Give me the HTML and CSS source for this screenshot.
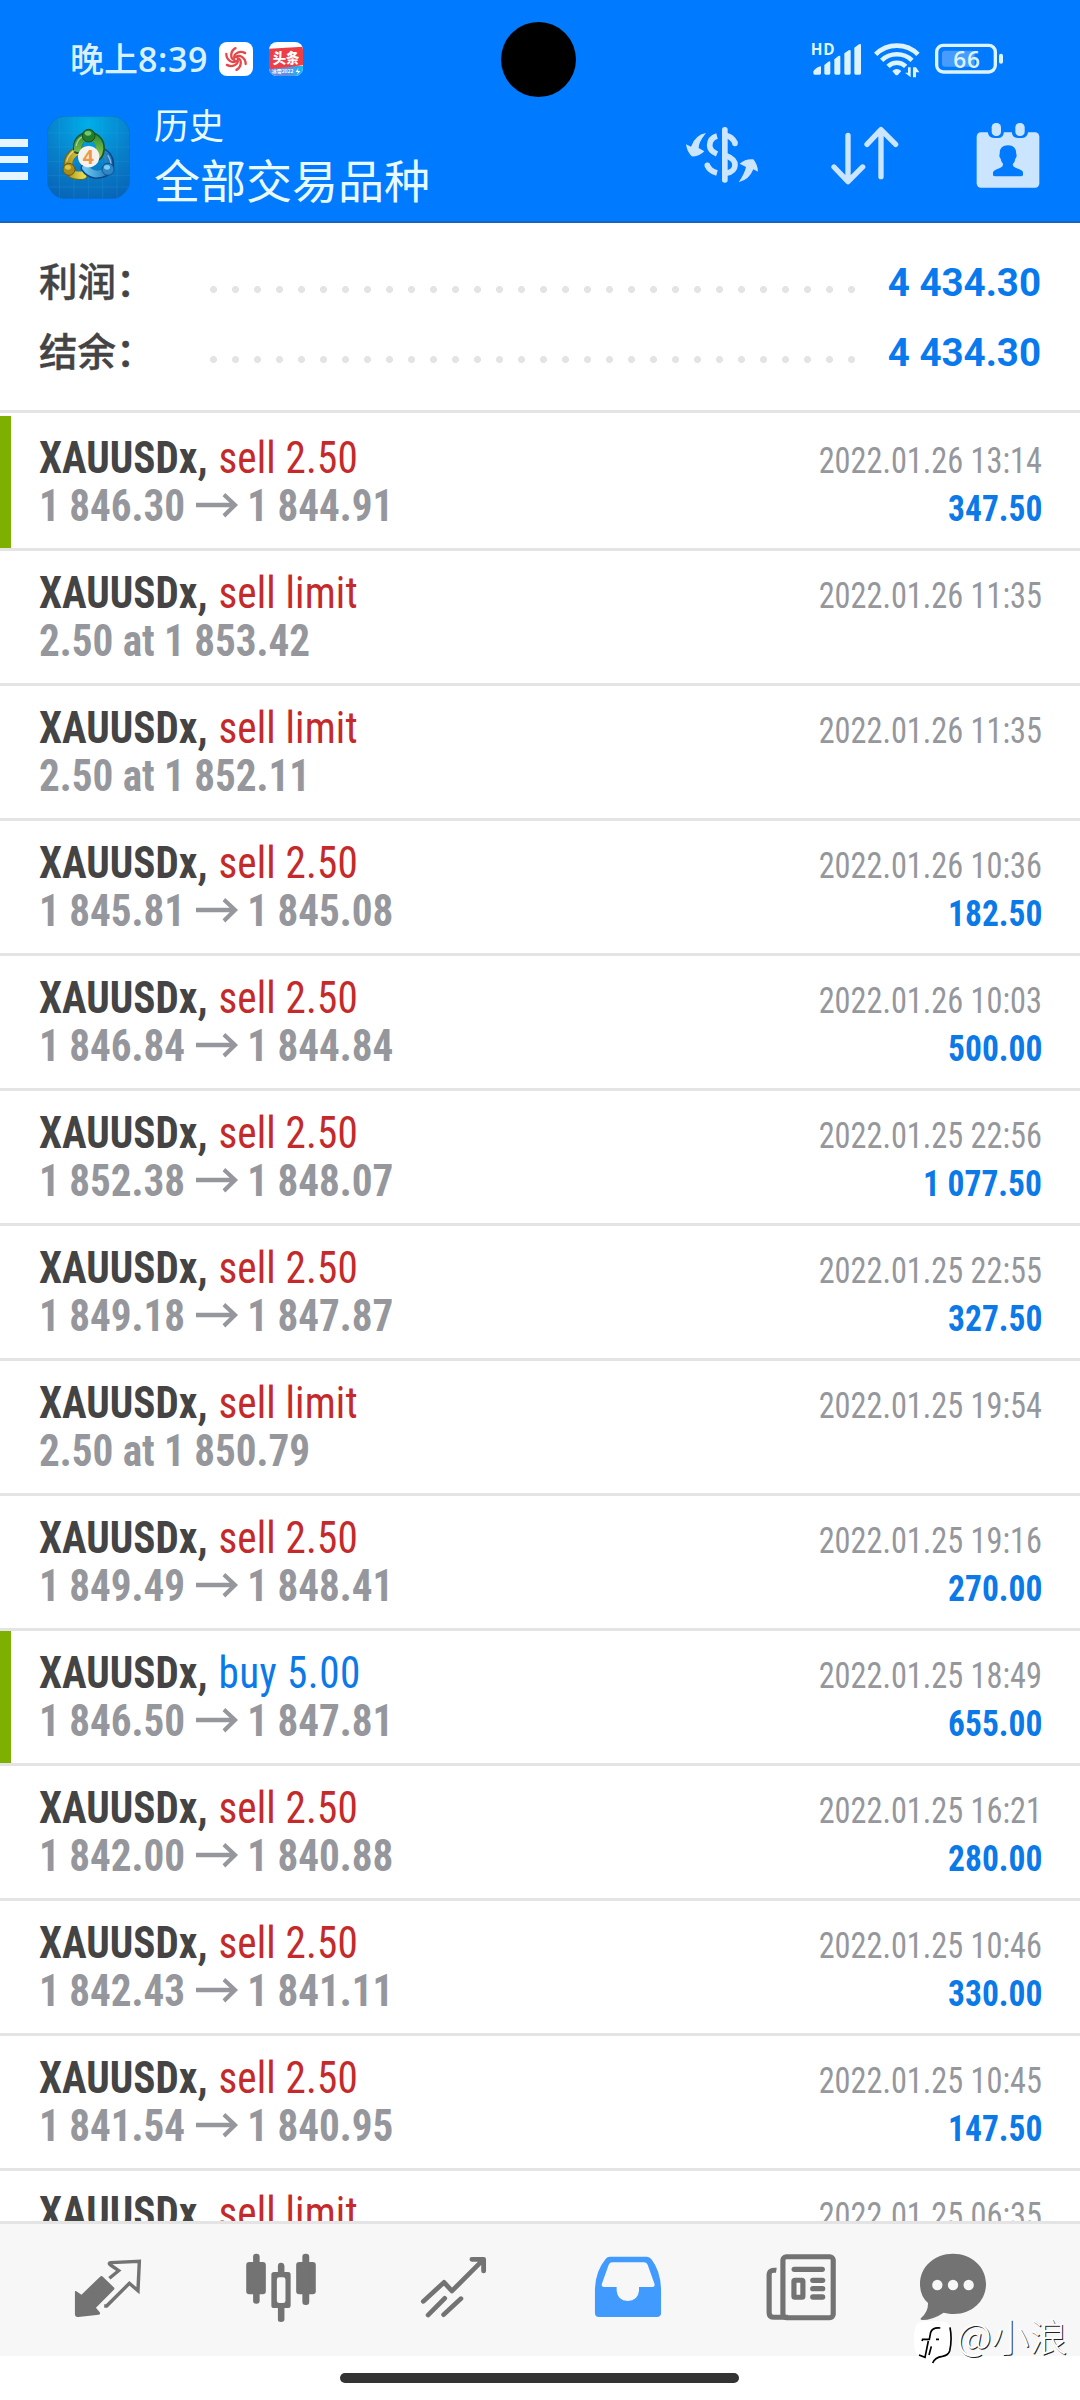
FILE: index.html
```html
<!DOCTYPE html>
<html lang="zh-CN">
<head>
<meta charset="utf-8">
<title>历史</title>
<link rel="stylesheet" href="styles.css">
</head>
<body>
<svg class="defs" width="0" height="0" aria-hidden="true">
  <symbol id="arrow" viewBox="586 320 128 72"><path d="M588 356H706M671 327L704 356L671 386" fill="none" stroke="#95979c" stroke-width="12"/></symbol>
</svg>
<header class="header">
  <div class="status">
    <div class="status-left">
      <span class="clock">晚上<b class="time">8:39</b></span>
      <svg class="badge" viewBox="0 0 102 102"><rect width="102" height="102" rx="24" fill="#fff"/><g fill="none" stroke="#e5484b" stroke-width="7" stroke-linecap="round"><path id="blade" d="M51 45C62 36 80 48 80 66"/><use href="#blade" transform="rotate(60 51 51)"/><use href="#blade" transform="rotate(120 51 51)"/><use href="#blade" transform="rotate(180 51 51)"/><use href="#blade" transform="rotate(240 51 51)"/><use href="#blade" transform="rotate(300 51 51)"/></g></svg>
      <svg class="badge badge-news" viewBox="0 0 102 102"><defs><clipPath id="r"><rect width="102" height="102" rx="24"/></clipPath><linearGradient id="nb"><stop offset=".5" stop-color="#668de0"/><stop offset="1" stop-color="#13b9f5"/></linearGradient></defs><g clip-path="url(#r)"><rect width="102" height="102" fill="#fff"/><path d="M0 72H102V102H0Z" fill="url(#nb)"/><path d="M0 20L102 14V70L0 82Z" fill="#ee3e45"/><text x="51" y="64" class="news-title" text-anchor="middle">头条</text><text x="8" y="94" class="news-sub">冰雪2022</text><path d="M88 79L80 90H87L84 98L94 87H87Z" fill="#fff"/></g></svg>
    </div>
    <svg class="status-icons" viewBox="420 34 582 114">
      <g fill="#ddf3ff">
        <text x="422" y="75" class="hd" textLength="72">HD</text>
        <path d="M430 125Q440 112 453 110V131Q453 135 449 135H434Q430 135 430 131ZM463 106L475 96Q481 93 481 98V131Q481 135 477 135H467Q463 135 463 131ZM493 89L505 79Q511 76 511 81V131Q511 135 507 135H497Q493 135 493 131ZM523 71L536 62Q542 59 542 64V131Q542 135 538 135H527Q523 135 523 131ZM553 54L567 44Q573 41 573 46V131Q573 135 569 135H557Q553 135 553 131Z"/>
        <path d="M667 124Q680 112 694 124L684 135Q680 139 676 135Z"/>
        <path d="M714 113H722V143L705 129H714ZM729 143V113H738L748 128H738V143Z"/>
        <rect x="987" y="72" width="12" height="30" rx="6"/>
      </g>
      <g fill="none" stroke="#ddf3ff" stroke-width="14"><path d="M617 74A90 90 0 0 1 744 74M635 92A66 66 0 0 1 726 92M654 110A38 38 0 0 1 707 110"/></g>
      <rect x="816" y="63" width="98" height="48" rx="9" fill="#479dff"/>
      <rect x="800" y="47" width="176" height="80" rx="20" fill="none" stroke="#ddf3ff" stroke-width="10"/>
      <text x="890" y="114" class="level" text-anchor="middle" textLength="80">66</text>
    </svg>
  </div>
  <div class="camera"></div>
  <div class="toolbar">
    <div class="menu"><i></i><i></i><i></i></div>
    <svg class="logo" viewBox="20 257 249 249">
      <defs>
        <radialGradient id="bg" cx=".5" cy=".1" r=".95"><stop offset="0" stop-color="#00aeea"/><stop offset=".55" stop-color="#087fc9"/><stop offset="1" stop-color="#0864b8"/></radialGradient>
        <linearGradient id="gg" x2="0" y2="1"><stop offset="0" stop-color="#2d9435"/><stop offset="1" stop-color="#8cc34f"/></linearGradient>
        <linearGradient id="yg"><stop offset="0" stop-color="#b59a1e"/><stop offset="1" stop-color="#e5da4e"/></linearGradient>
        <linearGradient id="ug"><stop offset="0" stop-color="#69c4f1"/><stop offset="1" stop-color="#1b78bb"/></linearGradient>
      </defs>
      <rect x="20.500" y="257.500" width="248" height="248" rx="56" fill="url(#bg)" stroke="#0a70c4" stroke-width="2"/>
      <path d="M58 262V501M101 258V505M144 258V505M187 258V505M230 262V501M22 308H267M21 350H268M21 393H268M21 436H268M25 470H264" stroke="#36b2e6" stroke-opacity=".28" stroke-width="2"/>
      <g fill="none" stroke-linecap="round">
        <path d="M128 435Q96 440 87 422Q74 388 101 367Q114 358 127 362" stroke="#5f6c24" stroke-width="26"/>
        <path d="M128 434Q98 438 88 422Q76 389 102 368Q114 360 126 363" stroke="url(#yg)" stroke-width="22"/>
        <path d="M182 363Q211 376 209 408Q201 434 165 433Q144 430 133 413" stroke="#0b4584" stroke-width="25"/>
        <path d="M183 365Q208 377 206 407Q199 431 167 431Q147 428 136 413" stroke="url(#ug)" stroke-width="21"/>
        <path d="M111 358Q108 324 145 315Q182 323 181 358Q179 374 171 379" stroke="#1c562b" stroke-width="26"/>
        <path d="M112 354Q112 325 145 317Q178 325 178 354Q177 368 170 376" stroke="url(#gg)" stroke-width="22"/>
        <path d="M108 345Q112 325 128 319M79 392Q86 370 102 361M203 376Q213 392 211 405" stroke="#fff" stroke-opacity=".5" stroke-width="4"/>
      </g>
      <circle cx="145" cy="316" r="19" fill="#237b2b" stroke="#145021" stroke-width="3"/><ellipse cx="143" cy="309" rx="10" ry="7" fill="#72c76d"/>
      <circle cx="86" cy="417" r="18" fill="#aa8b16" stroke="#65561d" stroke-width="3"/><ellipse cx="83" cy="411" rx="9" ry="7" fill="#d8c747"/>
      <circle cx="203" cy="417" r="18" fill="#2b87c7" stroke="#12508b" stroke-width="3"/><ellipse cx="200" cy="411" rx="9" ry="7" fill="#80cdf3"/>
      <circle cx="145" cy="379" r="32" fill="#f3f2ef"/><text x="144" y="400" class="four" text-anchor="middle">4</text>
    </svg>
    <div class="titles"><div class="sub">历史</div><h1 class="title">全部交易品种</h1></div>
    <svg class="tool tool-symbol" viewBox="48 290 219 174"><g fill="#cce5ff"><path d="M108 311Q85 340 86 356L103 366Q87 383 65 381Q51 367 48 345L63 352Q75 317 108 311ZM206 459Q225 430 228 413L209 403Q228 387 250 390Q263 406 264 427L250 420Q238 451 206 459Z"/><rect x="156" y="293" width="17" height="167" rx="8"/></g><g fill="none" stroke="#cce5ff" stroke-width="17"><path d="M141 320Q120 326 119 348Q119 365 141 374M112 408Q119 425 141 431M168 319Q186 321 196 342" /><path d="M168 379Q196 389 195 408Q194 427 168 432"/><path d="M112 408V408.1M195 342V342.1" stroke-linecap="round"/></g></svg>
    <svg class="tool tool-sort" viewBox="484 290 204 178"><path d="M535 318V456M493 413L535 457L579 413M634 442V303M592 345L634 301L678 345" fill="none" stroke="#cce5ff" stroke-width="16" stroke-linecap="round" stroke-linejoin="round"/></svg>
    <svg class="tool tool-date" viewBox="918 278 192 200"><rect x="920" y="309" width="188" height="166" rx="13" fill="#cce5ff"/><g fill="#007aff"><path d="M954 306V312Q957 326 972 326H986Q1001 326 1002 306ZM1026 306V312Q1028 326 1043 326H1057Q1072 326 1075 306Z"/><path d="M969 437V429Q972 421 990 416Q1002 411 998 402Q993 397 992 388Q986 383 989 374Q988 348 1014 348Q1039 348 1039 374Q1042 383 1036 388Q1035 397 1029 403Q1026 411 1038 416Q1057 421 1059 429V437Q1058 441 1052 441H976Q969 441 969 437Z"/></g><rect x="965" y="281" width="28" height="39" rx="13" fill="#cce5ff"/><rect x="1036" y="281" width="28" height="39" rx="13" fill="#cce5ff"/></svg>
  </div>
</header>

<section class="summary">
  <div class="sum-row"><span class="label">利润：</span><span class="dots"></span><strong class="total">4 434.30</strong></div>
  <div class="sum-row"><span class="label">结余：</span><span class="dots"></span><strong class="total">4 434.30</strong></div>
</section>

<main class="list">
  <article class="row marked"><div class="deal"><div><b>XAUUSDx,</b> <span class="sell">sell 2.50</span></div><div class="price">1 846.30<svg class="to"><use href="#arrow"/></svg>1 844.91</div></div><div class="info"><time>2022.01.26 13:14</time><b class="profit">347.50</b></div></article>
  <article class="row"><div class="deal"><div><b>XAUUSDx,</b> <span class="sell">sell limit</span></div><div class="price">2.50 at 1 853.42</div></div><div class="info"><time>2022.01.26 11:35</time></div></article>
  <article class="row"><div class="deal"><div><b>XAUUSDx,</b> <span class="sell">sell limit</span></div><div class="price">2.50 at 1 852.11</div></div><div class="info"><time>2022.01.26 11:35</time></div></article>
  <article class="row"><div class="deal"><div><b>XAUUSDx,</b> <span class="sell">sell 2.50</span></div><div class="price">1 845.81<svg class="to"><use href="#arrow"/></svg>1 845.08</div></div><div class="info"><time>2022.01.26 10:36</time><b class="profit">182.50</b></div></article>
  <article class="row"><div class="deal"><div><b>XAUUSDx,</b> <span class="sell">sell 2.50</span></div><div class="price">1 846.84<svg class="to"><use href="#arrow"/></svg>1 844.84</div></div><div class="info"><time>2022.01.26 10:03</time><b class="profit">500.00</b></div></article>
  <article class="row"><div class="deal"><div><b>XAUUSDx,</b> <span class="sell">sell 2.50</span></div><div class="price">1 852.38<svg class="to"><use href="#arrow"/></svg>1 848.07</div></div><div class="info"><time>2022.01.25 22:56</time><b class="profit">1 077.50</b></div></article>
  <article class="row"><div class="deal"><div><b>XAUUSDx,</b> <span class="sell">sell 2.50</span></div><div class="price">1 849.18<svg class="to"><use href="#arrow"/></svg>1 847.87</div></div><div class="info"><time>2022.01.25 22:55</time><b class="profit">327.50</b></div></article>
  <article class="row"><div class="deal"><div><b>XAUUSDx,</b> <span class="sell">sell limit</span></div><div class="price">2.50 at 1 850.79</div></div><div class="info"><time>2022.01.25 19:54</time></div></article>
  <article class="row"><div class="deal"><div><b>XAUUSDx,</b> <span class="sell">sell 2.50</span></div><div class="price">1 849.49<svg class="to"><use href="#arrow"/></svg>1 848.41</div></div><div class="info"><time>2022.01.25 19:16</time><b class="profit">270.00</b></div></article>
  <article class="row marked"><div class="deal"><div><b>XAUUSDx,</b> <span class="buy">buy 5.00</span></div><div class="price">1 846.50<svg class="to"><use href="#arrow"/></svg>1 847.81</div></div><div class="info"><time>2022.01.25 18:49</time><b class="profit">655.00</b></div></article>
  <article class="row"><div class="deal"><div><b>XAUUSDx,</b> <span class="sell">sell 2.50</span></div><div class="price">1 842.00<svg class="to"><use href="#arrow"/></svg>1 840.88</div></div><div class="info"><time>2022.01.25 16:21</time><b class="profit">280.00</b></div></article>
  <article class="row"><div class="deal"><div><b>XAUUSDx,</b> <span class="sell">sell 2.50</span></div><div class="price">1 842.43<svg class="to"><use href="#arrow"/></svg>1 841.11</div></div><div class="info"><time>2022.01.25 10:46</time><b class="profit">330.00</b></div></article>
  <article class="row"><div class="deal"><div><b>XAUUSDx,</b> <span class="sell">sell 2.50</span></div><div class="price">1 841.54<svg class="to"><use href="#arrow"/></svg>1 840.95</div></div><div class="info"><time>2022.01.25 10:45</time><b class="profit">147.50</b></div></article>
  <article class="row"><div class="deal"><div><b>XAUUSDx,</b> <span class="sell">sell limit</span></div></div><div class="info"><time>2022.01.25 06:35</time></div></article>
</main>

<nav class="nav">
  <svg viewBox="210.500 270 209 216" preserveAspectRatio="none"><path d="M219 395Q219 391 223 394L238 404L292 350Q296 346 300 350L333 383Q335 386 332 389L280 443L291 457Q294 463 288 464L229 471Q219 472 219 463Z" fill="#737373"/><path d="M319 355L346 332L321 314Q316 309 323 308L406 304L402 392L377 370L311 438H304" fill="none" stroke="#737373" stroke-width="10"/></svg>
  <svg viewBox="711.500 270 209 216" preserveAspectRatio="none"><g fill="#737373"><rect x="715" y="306" width="57" height="97" rx="9"/><rect x="735" y="281" width="19" height="150" rx="9"/><rect x="860" y="306" width="57" height="97" rx="9"/><rect x="878" y="281" width="20" height="154" rx="9"/><path d="M807 318Q807 308 816 308T826 318V336H837Q844 336 844 344V437Q844 444 837 444H826V478Q826 486 816 486T807 478V444H796Q788 444 788 437V344Q788 336 796 336H807Z"/></g><rect x="804" y="352" width="25" height="77" rx="7" fill="#f7f7f7"/></svg>
  <svg viewBox="1214.500 270 209 216" preserveAspectRatio="none"><path d="M1230 424L1290 367L1313 393L1403 300M1371 298H1405V333M1292 415L1244 465M1339 416L1289 464" fill="none" stroke="#737373" stroke-width="14" stroke-linecap="round" stroke-linejoin="round"/></svg>
  <svg viewBox="149.500 270 209 216" preserveAspectRatio="none"><path fill-rule="evenodd" d="M201 290H309Q317 290 322 298Q350 335 350 395V459Q350 471 337 471H170Q158 471 158 459V395Q158 335 189 297Q194 290 201 290ZM209 307Q201 307 198 314L178 372Q176 381 184 381H221V392Q224 422 253 423Q283 422 286 392V381H325Q333 381 331 372L311 314Q308 307 300 307Z" fill="#419bff"/></svg>
  <svg viewBox="653 270 209 216" preserveAspectRatio="none"><rect x="705" y="290" width="146" height="183" rx="10" fill="none" stroke="#737373" stroke-width="15"/><path d="M686 331Q665 328 665 345V458Q665 472 680 472H720" fill="none" stroke="#737373" stroke-width="15"/><path d="M738 328H819M792 361H820M792 386H820M792 411H820" stroke="#737373" stroke-width="16" stroke-linecap="round"/><rect x="737" y="361" width="26" height="51" rx="3" fill="none" stroke="#737373" stroke-width="15"/></svg>
  <svg viewBox="51 30 216 216"><path d="M159 41C214 41 258 80 258 132C258 190 203 236 131 218Q98 240 66 240Q58 239 64 233Q85 215 84 189Q60 168 60 132C60 80 104 41 159 41Z" fill="#737373"/><g fill="#f7f7f7"><circle cx="112" cy="135" r="15.500"/><circle cx="159" cy="135" r="15.500"/><circle cx="206" cy="135" r="15.500"/></g></svg>
</nav>
<footer class="gesture"><div class="pill"></div></footer>
<div class="watermark">
  <svg viewBox="40 240 120 134"><path d="M62 247Q99 239 136 247Q152 252 155 267Q161 300 152 332Q148 346 130 349Q109 353 100 369Q95 369 98 357Q60 356 48 339Q37 300 47 262Q51 249 62 247Z" fill="#fff"/><path d="M151 262Q158 298 150 333Q146 346 128 349Q106 352 99 369" fill="none" stroke="#000" stroke-width="5"/><path d="M122 264Q99 261 93 277L89 298H69L67 303M86 303L76 352L58 345M95 319L88 345M109 298H118" fill="none" stroke="#000" stroke-width="5"/></svg>
  <span>@小浪</span>
</div>
</body>
</html>
```
FILE: styles.css
```css
* { box-sizing: border-box; }
body {
  margin: 0;
  width: 1080px;
  height: 2400px;
  overflow: hidden;
  position: relative;
  display: flex;
  flex-direction: column;
  background: #fff;
  font-family: Roboto, "Noto Sans CJK SC", sans-serif;
}
svg { display: block; flex: none; }
.defs { position: absolute; }

/* header */
.header { height: 223px; flex: none; background: #007aff; border-bottom: 2px solid #1766bb; position: relative; }
.status { height: 98px; padding: 41px 76px 0 70px; display: flex; justify-content: space-between; }
.status-left { display: flex; }
.clock { width: 149px; height: 36px; line-height: 38px; font-size: 34px; font-weight: 500; color: #d9f1ff; white-space: nowrap; }
.time { font: 600 34px/34px "Open Sans", sans-serif; letter-spacing: .6px; }
.badge { width: 34px; height: 34px; margin-top: 1px; }
.badge-news { margin-left: 16px; }
.news-title { font: 900 40px "Noto Sans CJK SC", sans-serif; fill: #fff; }
.news-sub { font: 700 15px "Noto Sans CJK SC", sans-serif; fill: #fff; }
.status-icons { width: 194px; height: 38px; }
.hd { font: 700 46px "Open Sans", sans-serif; }
.level { font: 600 68px "Open Sans", sans-serif; fill: #ddf3ff; }
.four { font: 700 58px "Noto Sans", sans-serif; fill: #f0964b; }
.camera { position: absolute; left: 500.500px; top: 21.500px; width: 75px; height: 75px; border-radius: 50%; background: #000; }

.toolbar { display: flex; align-items: flex-start; }
.menu { width: 28px; margin: 41px 19px 0 0; display: flex; flex-direction: column; gap: 9px; }
.menu i { height: 7.500px; background: #e6f5ff; }
.logo { width: 83px; height: 83px; margin-top: 18px; }
.titles { margin-left: 24px; width: 532px; color: #e9faff; font-family: "Noto Sans CJK SC", sans-serif; padding-top: 7px; }
.sub { font-size: 35px; line-height: 38px; }
.title { margin: 5px 0 0; font-size: 46px; line-height: 60px; font-weight: 400; }
.tool-symbol { width: 73px; height: 58px; margin: 28px 0 0 0; }
.tool-sort { width: 68px; height: 59.300px; margin: 28px 0 0 72px; }
.tool-date { width: 64px; height: 66.700px; margin: 24px 0 0 77px; }

/* totals */
.summary { height: 190px; flex: none; padding: 21px 39px 0 39px; border-bottom: 3px solid #e4e4e4; }
.sum-row { height: 70px; line-height: 70px; font-size: 38.500px; display: flex; align-items: baseline; }
.label { width: 171px; color: #444; font-family: "Noto Sans CJK SC", sans-serif; font-weight: 500; -webkit-text-stroke: .4px #444; white-space: nowrap; }
.dots { width: 645px; height: 7px; align-self: center; margin-top: 20px; background: radial-gradient(circle at 3.500px 3.500px, #e4e4e4 3.200px, transparent 3.800px) 0 0 / 22px 7px repeat-x; }
.total { margin-left: auto; font-weight: 700; color: #087aed; }

/* deals */
.list { flex: 1; overflow: hidden; padding-top: 3px; min-height: 0; }
.row { height: 135px; padding: 0 38px 0 39px; display: flex; justify-content: space-between; border-bottom: 3px solid #e4e4e4; }
.marked { border-left: 11px solid #7eb000; padding-left: 28px; border-bottom: 0; height: 132px; margin-bottom: 3px; box-shadow: 0 3px #e4e4e4; }
.deal, .info { font-stretch: 75%; white-space: nowrap; }
.deal { font-size: 44px; line-height: 48px; padding-top: 18px; color: #444; transform: scaleX(.936); transform-origin: left; }
.deal b { font-weight: 700; margin-right: 1.500px; }
.sell { color: #c52a2a; font-weight: 450; letter-spacing: .15px; }
.buy { color: #0b79e8; font-weight: 450; letter-spacing: .5px; }
.price { font-weight: 700; color: #95979c; display: flex; align-items: center; letter-spacing: -.05px; }
.to { width: 46px; height: 26px; margin: -2px 9.500px 0 11px; }
.info { font-size: 36px; line-height: 48px; padding-top: 21px; text-align: right; display: flex; flex-direction: column; align-items: flex-end; }
.info time { color: #95979c; transform: scaleX(.897); transform-origin: right; }
.profit { font-weight: 700; color: #0b79e8; transform: scaleX(.93); transform-origin: right; }

/* bottom bar */
.nav { height: 135px; flex: none; background: #f7f7f7; border-top: 3px solid #e4e4e4; padding: 26px 0 0 72px; display: flex; gap: 101.200px; align-items: flex-start; }
.nav svg { width: 72px; height: 72px; }
.nav svg:last-child { margin-left: -20.500px; }
.gesture { height: 44px; flex: none; padding: 17px 0 0 340px; }
.pill { width: 399px; height: 10px; border-radius: 5px; background: #333; }

.watermark { position: absolute; left: 913px; top: 2320px; display: flex; align-items: flex-start; color: #fff; font: 300 38px/40px "Noto Sans CJK SC", sans-serif; white-space: nowrap; text-shadow: 1px 1px 0 #222; }
.watermark svg { width: 40px; height: 44.700px; margin-right: 4px; }
.watermark span { margin-top: -5px; }
```
